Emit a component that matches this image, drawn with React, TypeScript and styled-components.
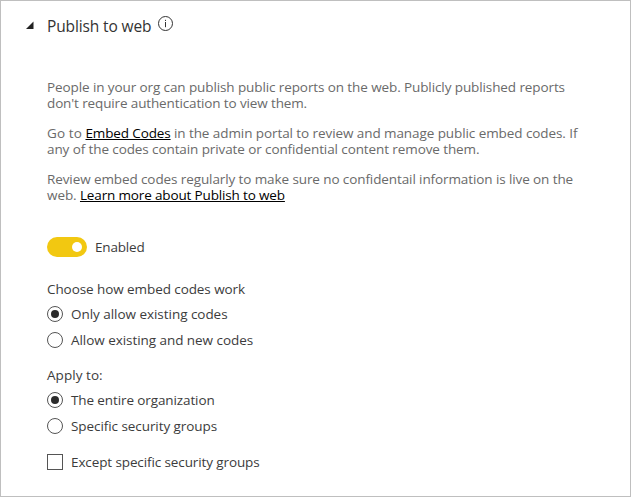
import React, { useState } from "react";
import styled, { createGlobalStyle } from "styled-components";

const GlobalStyle = createGlobalStyle`
  * { box-sizing: border-box; }
  body { margin: 0; background: #fff; }
`;

const Panel = styled.main`
  width: 631px;
  height: 497px;
  padding: 15px 0 0 25px;
  border: 1px solid #bfbfbf;
  background: #fff;
  color: #3c3c3c;
  font: 13.5px/16px "Open Sans", "Segoe UI", sans-serif;
  white-space: nowrap;
`;

const Header = styled.header`
  display: flex;
  height: 20px;
`;

const Caret = styled.svg`
  width: 8px;
  height: 8px;
  margin: 5px 13px 0 0;
`;

const Title = styled.h1`
  margin: 0;
  width: 111px;
  color: #333;
  font-size: 15.5px;
  font-weight: 400;
  line-height: 20px;
  letter-spacing: -0.12px;
`;

const InfoIcon = styled.svg`
  width: 16px;
  height: 16px;
`;

const Body = styled.div`
  display: flex;
  flex-direction: column;
  padding: 43px 0 0 21px;
`;

const Description = styled.section`
  display: flex;
  flex-direction: column;
  gap: 14px;
  color: #6a6a6a;
`;

const Paragraph = styled.p`
  margin: 0;
`;

const Text = styled.span<{ $track: number }>`
  letter-spacing: ${(p) => p.$track}px;
`;

const Link = styled.a<{ $track: number }>`
  color: #000;
  letter-spacing: ${(p) => p.$track}px;
  text-decoration: underline;
  text-decoration-thickness: 1px;
  text-decoration-skip-ink: none;
  text-underline-offset: 1px;
`;

const ToggleRow = styled.div`
  display: flex;
  align-items: center;
  gap: 8px;
  margin-top: 34px;
`;

const Toggle = styled.button<{ $on: boolean }>`
  display: flex;
  align-items: center;
  justify-content: ${(p) => (p.$on ? "flex-end" : "flex-start")};
  width: 40px;
  height: 20px;
  padding: 0 5px;
  border: 0;
  border-radius: 10px;
  background: ${(p) => (p.$on ? "#f2c811" : "#a6a6a6")};
`;

const Knob = styled.span`
  width: 10px;
  height: 10px;
  border-radius: 50%;
  background: #fff;
`;

const Group = styled.div<{ $top: number }>`
  display: flex;
  flex-direction: column;
  gap: 10px;
  margin-top: ${(p) => p.$top}px;
`;

const GroupLabel = styled.div`
  margin-bottom: -1px;
`;

const Option = styled.label`
  display: flex;
  gap: 8px;
  height: 16px;
`;

const Radio = styled.input.attrs({ type: "radio" })`
  appearance: none;
  display: grid;
  place-items: center;
  width: 16px;
  height: 16px;
  margin: 0;
  border: 1px solid #555;
  border-radius: 50%;
  &:checked::before {
    content: "";
    width: 8px;
    height: 8px;
    border-radius: 50%;
    background: #2b2b2b;
  }
`;

const Checkbox = styled.input.attrs({ type: "checkbox" })`
  appearance: none;
  width: 16px;
  height: 16px;
  margin: 0;
  border: 1px solid #555;
  &:checked {
    background: #333;
  }
`;

type Choice = { label: string; track: number };

const codeChoices: Choice[] = [
  { label: "Only allow existing codes", track: -0.04 },
  { label: "Allow existing and new codes", track: -0.05 },
];

const scopeChoices: Choice[] = [
  { label: "The entire organization", track: -0.11 },
  { label: "Specific security groups", track: -0.07 },
];

function RadioOptions({ name, choices }: { name: string; choices: Choice[] }) {
  const [selected, setSelected] = useState(0);
  return (
    <>
      {choices.map((c, i) => (
        <Option key={c.label}>
          <Radio name={name} checked={selected === i} onChange={() => setSelected(i)} />
          <Text $track={c.track}>{c.label}</Text>
        </Option>
      ))}
    </>
  );
}

export default function App() {
  const [enabled, setEnabled] = useState(true);
  return (
    <>
      <GlobalStyle />
      <Panel>
        <Header>
          <Caret viewBox="0 0 8 8">
            <path d="M7.5 0.5V8H0Z" fill="#222" />
          </Caret>
          <Title>Publish to web</Title>
          <InfoIcon viewBox="0 0 16 16">
            <circle cx="7.5" cy="7.5" r="7" fill="none" stroke="#333" />
            <path d="M7.5 6v5.2M7.5 3.8v1.2" stroke="#333" fill="none" />
          </InfoIcon>
        </Header>
        <Body>
          <Description>
            <Paragraph>
              <Text $track={-0.1}>
                People in your org can publish public reports on the web. Publicly published reports
              </Text>
              <br />
              <Text $track={-0.13}>don't require authentication to view them.</Text>
            </Paragraph>
            <Paragraph>
              <Text $track={0.1}>Go to </Text>
              <Link $track={-0.13}>Embed Codes</Link>
              <Text $track={-0.08}> in the admin portal to review and manage public embed codes. If</Text>
              <br />
              <Text $track={-0.1}>any of the codes contain private or confidential content remove them.</Text>
            </Paragraph>
            <Paragraph>
              <Text $track={-0.1}>
                Review embed codes regularly to make sure no confidentail information is live on the
              </Text>
              <br />
              <Text $track={-0.08}>web. </Text>
              <Link $track={-0.15}>Learn more about Publish to web</Link>
            </Paragraph>
          </Description>
          <ToggleRow>
            <Toggle $on={enabled} role="switch" aria-checked={enabled} onClick={() => setEnabled(!enabled)}>
              <Knob />
            </Toggle>
            <Text $track={-0.19}>Enabled</Text>
          </ToggleRow>
          <Group $top={24}>
            <GroupLabel>
              <Text $track={-0.08}>Choose how embed codes work</Text>
            </GroupLabel>
            <RadioOptions name="codes" choices={codeChoices} />
          </Group>
          <Group $top={19}>
            <GroupLabel>
              <Text $track={0.05}>Apply to:</Text>
            </GroupLabel>
            <RadioOptions name="scope" choices={scopeChoices} />
          </Group>
          <Group $top={20}>
            <Option>
              <Checkbox />
              <Text $track={-0.11}>Except specific security groups</Text>
            </Option>
          </Group>
        </Body>
      </Panel>
    </>
  );
}
